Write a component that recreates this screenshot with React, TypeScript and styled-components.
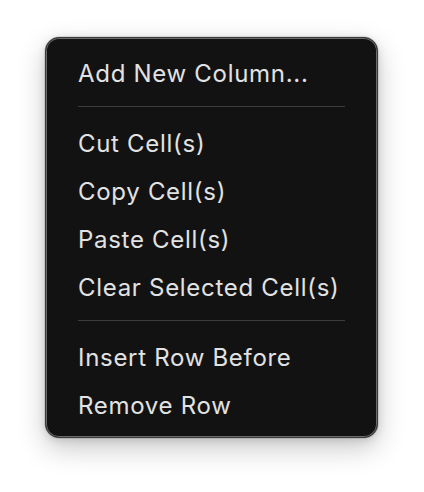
import React from "react";
import styled, { createGlobalStyle } from "styled-components";

const Global = createGlobalStyle`
  html, body {
    margin: 0;
    padding: 0;
    background: #ffffff;
  }
  body {
    font-family: Inter, "Noto Sans", "Liberation Sans", sans-serif;
    -webkit-font-smoothing: antialiased;
  }
`;

const Page = styled.div`
  width: 424px;
  height: 492px;
  box-sizing: border-box;
  padding: 37px 0 0 45px;
  background: #ffffff;
`;

const Menu = styled.div`
  width: 333px;
  box-sizing: border-box;
  background: #121212;
  border: 1px solid #3c3c3c;
  border-radius: 14px;
  box-shadow: inset 0 0 0 1px #6a6a6a, 0 0 0 0.5px rgba(0, 0, 0, 0.2),
    0 10px 28px rgba(0, 0, 0, 0.22), 0 2px 8px rgba(0, 0, 0, 0.12);
  padding: 12px 0 7px 0;
  display: flex;
  flex-direction: column;
`;

const Item = styled.div`
  height: 48px;
  line-height: 47px;
  padding: 0 32px;
  font-size: 24px;
  letter-spacing: 0.7px;
  font-weight: 400;
  color: #e2e2e2;
  white-space: nowrap;
`;

const Separator = styled.div`
  height: 1px;
  margin: 8px 32px 13px 32px;
  background: #3c3c3c;
`;

type Entry = { label: string } | { sep: true };

const entries: Entry[] = [
  { label: "Add New Column..." },
  { sep: true },
  { label: "Cut Cell(s)" },
  { label: "Copy Cell(s)" },
  { label: "Paste Cell(s)" },
  { label: "Clear Selected Cell(s)" },
  { sep: true },
  { label: "Insert Row Before" },
  { label: "Remove Row" },
];

export default function App() {
  return (
    <>
      <Global />
      <Page>
        <Menu>
          {entries.map((e, i) =>
            "sep" in e ? <Separator key={i} /> : <Item key={i}>{e.label}</Item>
          )}
        </Menu>
      </Page>
    </>
  );
}
